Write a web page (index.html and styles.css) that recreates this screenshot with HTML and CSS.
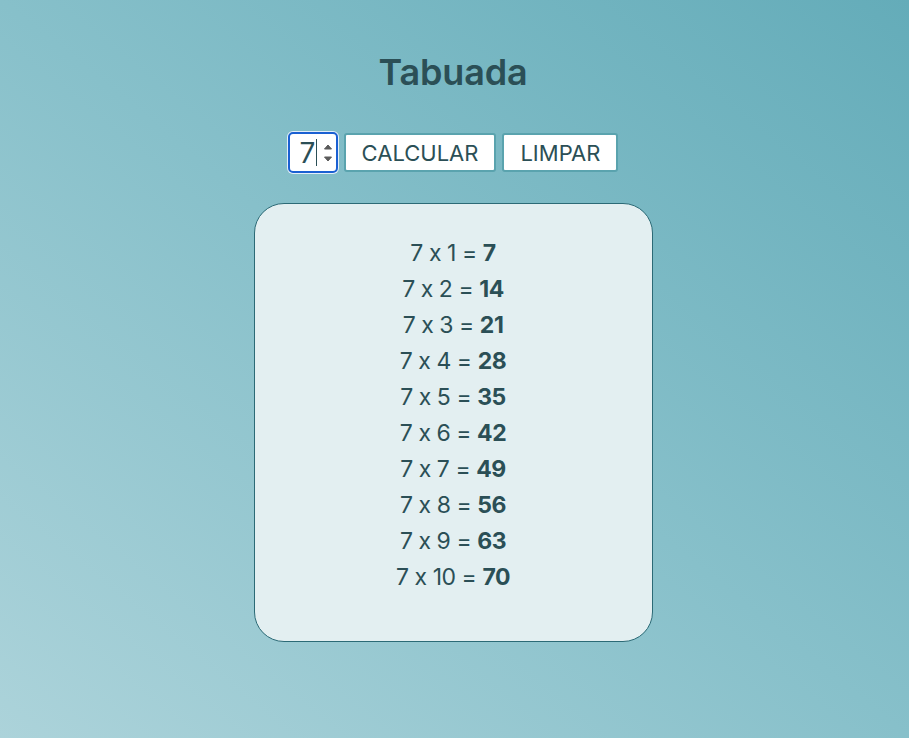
FILE: index.html
```html
<!DOCTYPE html>
<html lang="pt">
<head>
<meta charset="utf-8">
<title>Tabuada</title>
<link rel="stylesheet" href="styles.css">
</head>
<body>
<main class="app">
  <h1 class="title">Tabuada</h1>
  <div class="controls">
    <div class="num-input">
      <span class="num-value">7</span><span class="caret"></span>
      <span class="spinner">
        <svg width="10" height="24" viewBox="0 0 10 24"><path d="M1.5 8 L5 4 L8.5 8 Z" fill="#5a5a5a" stroke="#5a5a5a" stroke-width="1" stroke-linejoin="round"/><path d="M1.5 16 L5 20 L8.5 16 Z" fill="#5a5a5a" stroke="#5a5a5a" stroke-width="1" stroke-linejoin="round"/></svg>
      </span>
    </div>
    <button class="btn">CALCULAR</button>
    <button class="btn">LIMPAR</button>
  </div>
  <section class="result">
    <p class="row">7 x 1 = <b>7</b></p>
    <p class="row">7 x 2 = <b>14</b></p>
    <p class="row">7 x 3 = <b>21</b></p>
    <p class="row">7 x 4 = <b>28</b></p>
    <p class="row">7 x 5 = <b>35</b></p>
    <p class="row">7 x 6 = <b>42</b></p>
    <p class="row">7 x 7 = <b>49</b></p>
    <p class="row">7 x 8 = <b>56</b></p>
    <p class="row">7 x 9 = <b>63</b></p>
    <p class="row">7 x 10 = <b>70</b></p>
  </section>
</main>
</body>
</html>
```
FILE: styles.css
```css
html, body {
  margin: 0;
  height: 100%;
}
body {
  font-family: Inter, "Noto Sans", sans-serif;
  font-feature-settings: "calt" 0;
  color: #2b4f56;
  background: linear-gradient(to top right, #acd3da 0%, #87c0ca 50%, #64acb9 100%);
}
.app {
  display: flex;
  flex-direction: column;
  align-items: center;
  padding: 50px 3px 0 0;
}
.title {
  margin: 0;
  font-size: 36px;
  font-weight: 600;
  line-height: 44px;
  letter-spacing: -0.005em;
  color: #2b4f56;
}
.controls {
  display: flex;
  align-items: center;
  gap: 6px;
  margin-top: 38px;
}
.num-input {
  box-sizing: border-box;
  width: 50px;
  height: 41px;
  background: #fff;
  border: 2px solid #1a60d2;
  border-radius: 5px;
  box-shadow: 0 0 0 1px #e4eefa;
  display: flex;
  align-items: center;
  padding-left: 10px;
  font-size: 28px;
  color: #2b4f56;
}
.num-value { line-height: 1; }
.caret {
  width: 1px;
  height: 27px;
  background: #2b4f56;
  margin-left: 1px;
}
.spinner {
  margin-left: 6px;
  display: flex;
}
.btn {
  box-sizing: border-box;
  height: 39px;
  padding: 0 16px;
  background: #fff;
  border: 2px solid #5aa3ae;
  border-radius: 3px;
  font-family: inherit;
  font-feature-settings: "calt" 0;
  font-size: 22px;
  color: #2b4f56;
}
.result {
  box-sizing: border-box;
  width: 399px;
  margin-top: 30px;
  padding: 31px 0 46px;
  background: #e3eff1;
  border: 1px solid #2c6a76;
  border-radius: 30px;
  text-align: center;
}
.row {
  margin: 0;
  font-size: 23px;
  line-height: 36px;
  letter-spacing: -0.02em;
  color: #2b4f56;
}
.row b {
  font-weight: 700;
}
```
